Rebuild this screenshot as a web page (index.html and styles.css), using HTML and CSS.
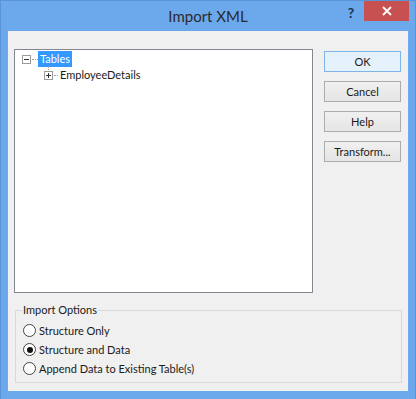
FILE: index.html
```html
<!DOCTYPE html>
<html lang="en">
<head>
    <meta charset="UTF-8">
    <meta name="viewport" content="width=device-width, initial-scale=1.0">
    <title>Import XML</title>
    <link rel="stylesheet" href="styles.css">
</head>
<body>
    <div class="window">
        <div class="titlebar">
            <div class="title">Import XML</div>
            <div class="caption-buttons">
                <span class="help-btn">?</span>
                <span class="close-btn">
                    <svg width="10" height="10" viewBox="0 0 10 10"><path d="M1 1 L9 9 M9 1 L1 9" stroke="#fff" stroke-width="1.8"/></svg>
                </span>
            </div>
        </div>
        <div class="client">
            <div class="top-row">
                <div class="tree">
                    <div class="node">
                        <span class="expander">
                            <svg width="9" height="9" viewBox="0 0 9 9"><rect x="0.5" y="0.5" width="8" height="8" fill="#fff" stroke="#9a9a9a"/><path d="M2 4.5 H7" stroke="#333"/></svg>
                        </span>
                        <span class="dots"></span>
                        <span class="label selected">Tables</span>
                    </div>
                    <div class="node child">
                        <span class="expander">
                            <svg width="9" height="9" viewBox="0 0 9 9"><rect x="0.5" y="0.5" width="8" height="8" fill="#fff" stroke="#9a9a9a"/><path d="M2 4.5 H7 M4.5 2 V7" stroke="#333"/></svg>
                        </span>
                        <span class="dots"></span>
                        <span class="label">EmployeeDetails</span>
                    </div>
                </div>
                <div class="buttons">
                    <button class="btn default">OK</button>
                    <button class="btn">Cancel</button>
                    <button class="btn">Help</button>
                    <button class="btn">Transform...</button>
                </div>
            </div>
            <fieldset class="group">
                <legend>Import Options</legend>
                <label class="radio"><span class="circle"></span>Structure Only</label>
                <label class="radio"><span class="circle checked"></span>Structure and Data</label>
                <label class="radio"><span class="circle"></span>Append Data to Existing Table(s)</label>
            </fieldset>
        </div>
    </div>
</body>
</html>
```

FILE: styles.css
```css
:root {
    --frame-color: #6ba8ec;
    --client-bg: #f0f0f0;
    --text-color: #1a1a1a;
    --ui-font: 'Lato', 'Open Sans', sans-serif;
}
body {
    margin: 0;
    font-family: var(--ui-font);
    font-size: 11px;
    color: var(--text-color);
}
.window {
    width: 416px;
    height: 399px;
    box-sizing: border-box;
    background: var(--frame-color);
    border: 1px solid #5a93d6;
    border-bottom: none;
    padding: 0 7px 8px 7px;
    display: flex;
    flex-direction: column;
}
.titlebar {
    height: 30px;
    position: relative;
    display: flex;
    align-items: center;
    justify-content: center;
}
.title {
    font-size: 15px;
    color: #2b2b2b;
    margin-top: -1px;
}
.caption-buttons {
    position: absolute;
    right: -1px;
    top: 0;
    display: flex;
    align-items: flex-start;
}
.help-btn {
    font-weight: bold;
    font-size: 14px;
    color: #1e3450;
    width: 26px;
    text-align: center;
    margin-top: 3px;
}
.close-btn {
    width: 45px;
    height: 20px;
    background: #c75050;
    display: flex;
    align-items: center;
    justify-content: center;
}
.client {
    flex: 1;
    background: var(--client-bg);
    padding: 18px 6px 0 6px;
    display: flex;
    flex-direction: column;
}
.top-row {
    display: flex;
    gap: 11px;
}
.tree {
    width: 299px;
    height: 244px;
    box-sizing: border-box;
    background: #fff;
    border: 1px solid #828790;
    padding-top: 1px;
}
.node {
    height: 16px;
    display: flex;
    align-items: center;
    padding-left: 7px;
}
.node.child {
    padding-left: 29px;
}
.expander {
    width: 9px;
    height: 9px;
    display: flex;
    position: relative;
}
.node.child .expander::before {
    content: '';
    position: absolute;
    left: 4px;
    top: -5px;
    height: 4px;
    border-left: 1px dotted #a0a0a0;
}
.dots {
    width: 6px;
    border-top: 1px dotted #a0a0a0;
    margin-left: 1px;
}
.node.child .dots {
    width: 4px;
}
.label {
    padding: 0 2px;
    line-height: 16px;
}
.label.selected {
    background: #3399ff;
    color: #fff;
}
.buttons {
    display: flex;
    flex-direction: column;
    gap: 9px;
    padding-top: 2px;
}
.btn {
    width: 77px;
    height: 21px;
    font-family: var(--ui-font);
    font-size: 11px;
    color: var(--text-color);
    background: linear-gradient(#f0f0f0, #e5e5e5);
    border: 1px solid #acacac;
    padding: 0;
}
.btn.default {
    background: #e5f1fb;
    border-color: #7eb4ea;
}
.group {
    margin: 9px 0 0 1px;
    padding: 3px 7px 4px 7px;
    border: 1px solid #d9d9d9;
    min-inline-size: auto;
}
.group legend {
    padding: 0 1px;
    margin-left: -1px;
    line-height: 16px;
}
.radio {
    height: 19px;
    display: flex;
    align-items: center;
    gap: 3px;
}
.circle {
    width: 11px;
    height: 11px;
    border: 1px solid #444;
    border-radius: 50%;
    background: #fff;
    display: flex;
    align-items: center;
    justify-content: center;
}
.circle.checked::after {
    content: '';
    width: 6px;
    height: 6px;
    border-radius: 50%;
    background: #111;
}
```
